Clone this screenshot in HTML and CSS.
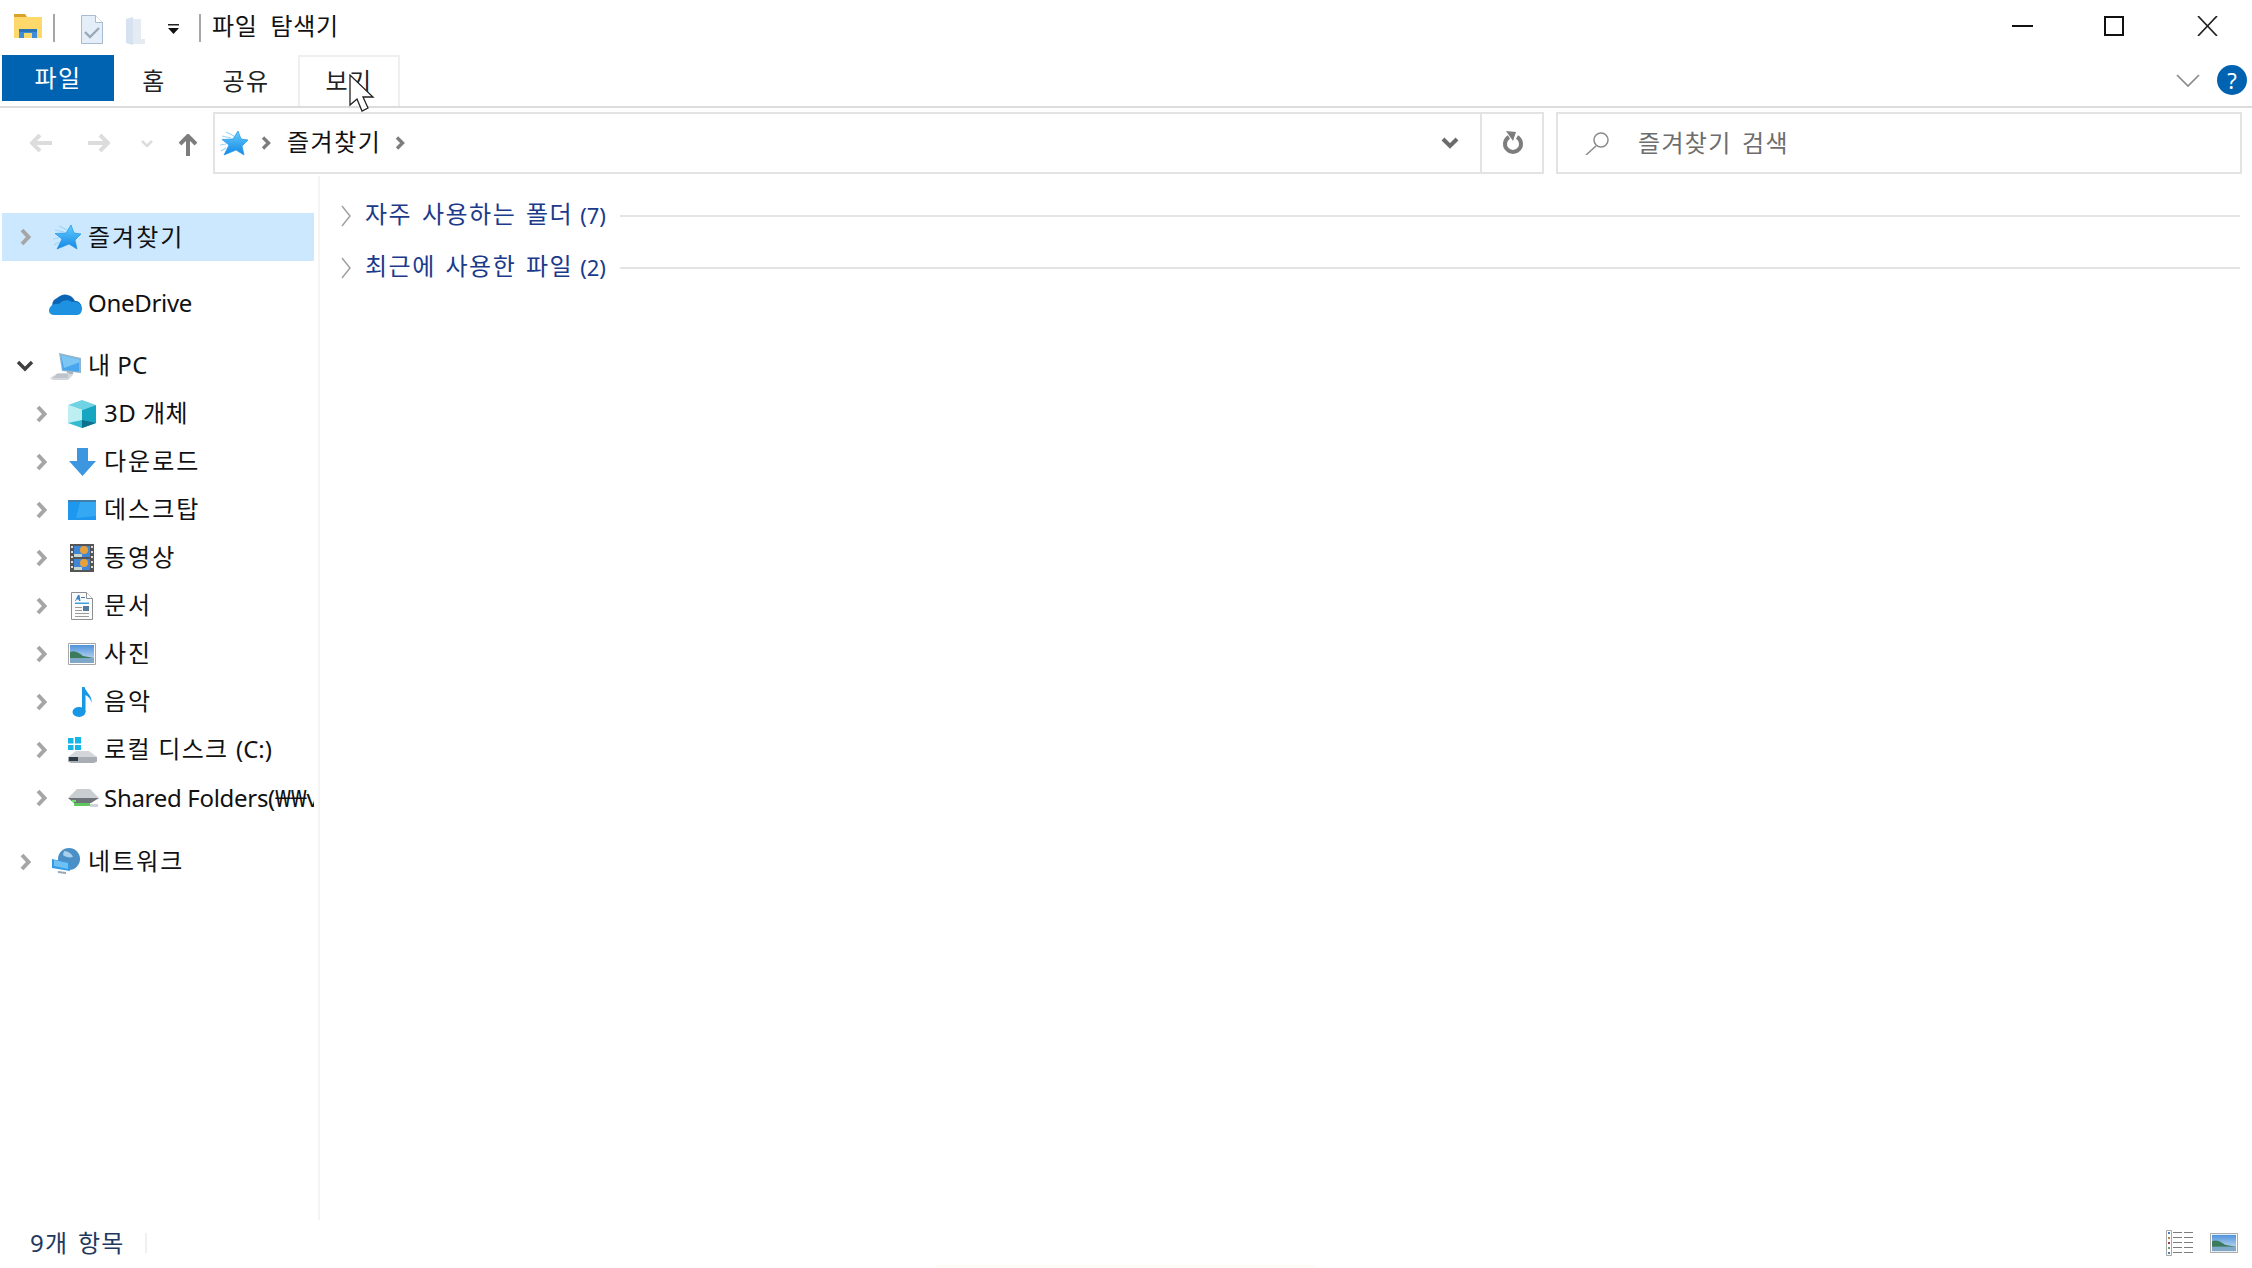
FILE: index.html
```html
<!DOCTYPE html>
<html lang="ko">
<head>
<meta charset="utf-8">
<title>파일 탐색기</title>
<link rel="stylesheet" href="styles.css">
</head>
<body>
<div class="window">
  <header class="titlebar">
    <div class="qat">
      <svg class="i-folder" width="28" height="24" viewBox="0 0 28 24"><path d="M0 0h11l2 3h15v21H0z" fill="#ffd86b"/><path d="M0 0h11l2 3H0z" fill="#d9a32a"/><path d="M5 24v-9h18v9h-5v-5h-8v5z" fill="#3f8fd6"/><path d="M5 15h18v3H5z" fill="#2a74b8"/></svg>
      <span class="qat-sep"></span>
      <svg class="i-check" width="22" height="29" viewBox="0 0 22 29"><path d="M.5.5h14l7 7v21H.5z" fill="#e4eef9" stroke="#aabbd0"/><path d="M14.5.5v7h7" fill="#fff" stroke="#aabbd0"/><path d="M4 17l5 5 9-9" fill="none" stroke="#9aa9b8" stroke-width="2.4"/></svg>
      <svg class="i-newfolder" width="19" height="28" viewBox="0 0 19 28"><path d="M0 2l7-2v28l-7-2z" fill="#d6e2ef"/><path d="M7 2h8v20h4v5H7z" fill="#e4ebf3"/></svg>
      <svg class="i-drop" width="11" height="10" viewBox="0 0 11 10"><path d="M0 0h11v1.500H0z" fill="#222"/><path d="M0 4h11l-5.500 6z" fill="#111"/></svg>
      <span class="qat-sep second"></span>
      <span class="title-text">파일 탐색기</span>
    </div>
    <div class="winctrls">
      <svg width="21" height="2" viewBox="0 0 21 2"><path d="M0 0h21v2H0z" fill="#111"/></svg>
      <svg class="maxbox" width="20" height="20" viewBox="0 0 20 20"><path d="M1 1h18v18H1z" fill="none" stroke="#111" stroke-width="2"/></svg>
      <svg width="21" height="20" viewBox="0 0 21 20"><path d="M1 0l19 20M20 0L1 20" stroke="#222" stroke-width="1.700" fill="none"/></svg>
    </div>
  </header>

  <nav class="ribbon">
    <span class="tab tab-file">파일</span>
    <span class="tab tab-home">홈</span>
    <span class="tab tab-share">공유</span>
    <span class="tab tab-view">보기</span>
    <div class="ribbon-right">
      <svg width="24" height="13" viewBox="0 0 24 13"><path d="M1 1l11 11L23 1" fill="none" stroke="#8a8a8a" stroke-width="1.700"/></svg>
      <span class="help">?</span>
    </div>
  </nav>

  <div class="addressrow">
    <div class="navbtns">
      <svg class="n-back" width="22" height="18" viewBox="0 0 22 18"><path d="M10 1L2 9l8 8M2 9h20" fill="none" stroke="#dcdcdc" stroke-width="4"/></svg>
      <svg class="n-fwd" width="22" height="18" viewBox="0 0 22 18"><path d="M12 1l8 8-8 8M20 9H0" fill="none" stroke="#dcdcdc" stroke-width="4"/></svg>
      <svg class="n-down" width="12" height="7" viewBox="0 0 12 7"><path d="M1 1l5 5 5-5" fill="none" stroke="#dcdcdc" stroke-width="2.500"/></svg>
      <svg class="n-up" width="18" height="22" viewBox="0 0 18 22"><path d="M1 10l8-8 8 8M9 2v20" fill="none" stroke="#7d7d7d" stroke-width="4"/></svg>
    </div>
    <div class="addrbox">
      <svg class="star-sm" width="28" height="26" viewBox="0 0 28 26"><use href="#star"/></svg>
      <svg class="crumb" width="10" height="14" viewBox="0 0 10 14"><path d="M2 1.500l5.500 5.500L2 12.500" fill="none" stroke="#7d7d7d" stroke-width="3.400"/></svg>
      <span class="crumb-text">즐겨찾기</span>
      <svg class="crumb" width="10" height="14" viewBox="0 0 10 14"><path d="M2 1.500l5.500 5.500L2 12.500" fill="none" stroke="#7d7d7d" stroke-width="3.400"/></svg>
      <svg class="addr-drop" width="18" height="12" viewBox="0 0 18 12"><path d="M2 2l7 7 7-7" fill="none" stroke="#6b6b6b" stroke-width="4"/></svg>
      <span class="addr-refresh">
        <svg width="22" height="24" viewBox="0 0 22 24"><path d="M7 6a8 8 0 1 0 8 0" fill="none" stroke="#7d7d7d" stroke-width="4"/><path d="M4 0l10 1-3 9z" fill="#7d7d7d"/></svg>
      </span>
    </div>
    <div class="searchbox">
      <svg width="26" height="24" viewBox="0 0 26 24"><circle cx="16" cy="9" r="7" fill="none" stroke="#8a8a8a" stroke-width="1.500"/><path d="M11 15L1 24" stroke="#8a8a8a" stroke-width="1.500"/></svg>
      <span class="search-text">즐겨찾기 검색</span>
    </div>
  </div>

  <div class="main">
    <aside class="sidebar">
      <ul class="tree">
        <li class="node top selected">
          <svg class="chev" width="12" height="20" viewBox="0 0 12 20"><use href="#chev"/></svg>
          <svg class="ico ico-star" width="28" height="26" viewBox="0 0 28 26"><use href="#star"/></svg>
          <span class="lbl kr">즐겨찾기</span>
        </li>
        <li class="node top gap-onedrive">
          <span class="chev-space"></span>
          <svg class="ico" width="33" height="24" viewBox="0 0 33 24"><path d="M9 21a8 8 0 0 1-1-15 11 11 0 0 1 18 3 6 6 0 0 1 1 12z" fill="#0a66b5"/><path d="M0 19c0-5 5-8 10-7 3-4 9-5 13-2 4-1 10 1 10 7 0 3-2 6-5 6H5c-3 0-5-2-5-4z" fill="#1e92e0"/></svg>
          <span class="lbl lat">OneDrive</span>
        </li>
        <li class="node top gap-pc">
          <svg class="chev-open" width="18" height="12" viewBox="0 0 18 12"><path d="M2 2l7 7 7-7" fill="none" stroke="#404040" stroke-width="3.400"/></svg>
          <svg class="ico ico-pc" width="32" height="30" viewBox="0 0 32 30"><path d="M9 2l22 5v15l-19-2z" fill="#8fb4cc"/><path d="M11 4l18 4.500v12l-16.500-1.500z" fill="#47a6ee"/><path d="M11 4l18 4.500v3L14 17z" fill="#7cc6f4"/><path d="M17 20l6 .5v3l-6-.5z" fill="#a9b4bf"/><path d="M0 27l8-5h10l5 2-5 5H3z" fill="#d3d7db"/><path d="M4 26h14M6 24h12" stroke="#aab1b8"/></svg>
          <span class="lbl mix">내 PC</span>
        </li>
        <li class="node sub">
          <svg class="chev" width="12" height="20" viewBox="0 0 12 20"><use href="#chev"/></svg>
          <svg class="ico" width="28" height="28" viewBox="0 0 28 28"><path d="M14 0l14 5-14 5L0 5z" fill="#6fd3e3"/><path d="M0 5l14 5v18L0 23z" fill="#bdeef2"/><path d="M14 10l14-5v18l-14 5z" fill="#17a6c2"/><path d="M14 20l14 3-14 5z" fill="#0f6f8c"/><path d="M0 23l14-3v8z" fill="#33bcd0"/></svg>
          <span class="lbl mix">3D 개체</span>
        </li>
        <li class="node sub">
          <svg class="chev" width="12" height="20" viewBox="0 0 12 20"><use href="#chev"/></svg>
          <svg class="ico ico-down" width="27" height="28" viewBox="0 0 27 28"><path d="M8 0h11v13h8L13.500 28 0 13h8z" fill="#3c97e0"/></svg>
          <span class="lbl kr">다운로드</span>
        </li>
        <li class="node sub">
          <svg class="chev" width="12" height="20" viewBox="0 0 12 20"><use href="#chev"/></svg>
          <svg class="ico" width="28" height="20" viewBox="0 0 28 20"><path d="M0 0h28v20H0z" fill="#1e98ee"/><path d="M0 0h28v2H0z" fill="#3e7fae"/><path d="M12 2h16v14L8 18z" fill="#35a8f4"/></svg>
          <span class="lbl kr">데스크탑</span>
        </li>
        <li class="node sub">
          <svg class="chev" width="12" height="20" viewBox="0 0 12 20"><use href="#chev"/></svg>
          <svg class="ico" width="28" height="28" viewBox="0 0 28 28"><path d="M2 0h24v28H2z" fill="#555"/><path d="M6 2h16v11H6z" fill="#3e86d8"/><path d="M6 15h16v11H6z" fill="#3e86d8"/><circle cx="16" cy="6" r="4" fill="#e8a13a"/><circle cx="16" cy="19" r="4" fill="#e8a13a"/><path d="M6 10h8v3H6zM6 23h8v3H6z" fill="#c9d6c9"/><path d="M3 2h2v2H3zM3 7h2v2H3zM3 12h2v2H3zM3 17h2v2H3zM3 22h2v2H3zM23 2h2v2h-2zM23 7h2v2h-2zM23 12h2v2h-2zM23 17h2v2h-2zM23 22h2v2h-2z" fill="#ddd"/></svg>
          <span class="lbl kr">동영상</span>
        </li>
        <li class="node sub">
          <svg class="chev" width="12" height="20" viewBox="0 0 12 20"><use href="#chev"/></svg>
          <svg class="ico ico-doc" width="22" height="28" viewBox="0 0 22 28"><path d="M.5.5h15l6 6v21H.5z" fill="#fbfbfb" stroke="#8f8f8f"/><path d="M15.500.5v6h6" fill="#fff" stroke="#8f8f8f"/><path d="M4 9l3-6h1.500l1 6H8l-.2-1.500H5.500L5 9z" fill="#3f82c4"/><path d="M10 5h4v1h-4z" fill="#3f82c4"/><path d="M4 10.500h14V12H4z" fill="#3aa0dc"/><path d="M4 15h7v1H4zM4 18h7v1H4zM4 21h14v1H4zM4 24h14v1H4z" fill="#9a9a9a"/><path d="M12 14h6v5h-6z" fill="#55799a"/></svg>
          <span class="lbl kr">문서</span>
        </li>
        <li class="node sub">
          <svg class="chev" width="12" height="20" viewBox="0 0 12 20"><use href="#chev"/></svg>
          <svg class="ico" width="28" height="22" viewBox="0 0 28 22"><use href="#photo"/></svg>
          <span class="lbl kr">사진</span>
        </li>
        <li class="node sub">
          <svg class="chev" width="12" height="20" viewBox="0 0 12 20"><use href="#chev"/></svg>
          <svg class="ico ico-music" width="22" height="30" viewBox="0 0 22 30"><ellipse cx="7" cy="25" rx="6.500" ry="5" fill="#1797e4"/><path d="M10 25V0h2.500c1 5 8 8 7 16-1-5-4-7-6-8v17z" fill="#1797e4"/></svg>
          <span class="lbl kr">음악</span>
        </li>
        <li class="node sub">
          <svg class="chev" width="12" height="20" viewBox="0 0 12 20"><use href="#chev"/></svg>
          <svg class="ico" width="29" height="26" viewBox="0 0 29 26"><path d="M0 1h5.500v5.500H0zM7 0h6v6.500H7zM0 8h5.500v5H0zM7 8h6v5H7z" fill="#16b6e8"/><path d="M0 20l8-6h13l8 6v5H0z" fill="#d3d7db"/><path d="M0 20h29v4.500L26 26H3L0 24.500z" fill="#a8aeb4"/><path d="M1 20h9v4H1z" fill="#2f3a42"/></svg>
          <span class="lbl disk">로컬 디스크 <span class="latin">(C:)</span></span>
        </li>
        <li class="node sub row-shared">
          <svg class="chev" width="12" height="20" viewBox="0 0 12 20"><use href="#chev"/></svg>
          <svg class="ico" width="31" height="20" viewBox="0 0 31 20"><path d="M0 10L9 1h13l9 9-8 3H8z" fill="#c9ced3"/><path d="M0 10h31l-8 5H6z" fill="#6d7378"/><path d="M4 12h4v2H4z" fill="#6fe06a"/><path d="M6 15h16v3H6z" fill="#5ec85c"/><path d="M22 16h8v3h-8z" fill="#cfd4d8"/></svg>
          <span class="lbl lat">Shared Folders(₩₩vmware-host)</span>
        </li>
        <li class="node top gap-net">
          <svg class="chev" width="12" height="20" viewBox="0 0 12 20"><use href="#chev"/></svg>
          <svg class="ico" width="28" height="28" viewBox="0 0 28 28"><circle cx="17" cy="11" r="11" fill="#4a8fc6"/><path d="M12 3c4 0 8 3 9 6-3 1-8 0-10-2z" fill="#a8d0ea"/><path d="M0 11l18 4v8L0 20z" fill="#2f9be8"/><path d="M2 12l14 3v6L2 18z" fill="#6fc1f4"/><path d="M6 23l8 1v2l-8-1z" fill="#9aa6b0"/></svg>
          <span class="lbl kr">네트워크</span>
        </li>
      </ul>
    </aside>
    <section class="content">
      <div class="group">
        <svg width="10" height="22" viewBox="0 0 10 22"><path d="M1 1l8 10-8 10" fill="none" stroke="#a0a0a0" stroke-width="1.500"/></svg>
        <span class="group-name">자주 사용하는 폴더</span><span class="group-count">(7)</span>
        <span class="group-line"></span>
      </div>
      <div class="group">
        <svg width="10" height="22" viewBox="0 0 10 22"><path d="M1 1l8 10-8 10" fill="none" stroke="#a0a0a0" stroke-width="1.500"/></svg>
        <span class="group-name">최근에 사용한 파일</span><span class="group-count">(2)</span>
        <span class="group-line"></span>
      </div>
    </section>
  </div>

  <footer class="statusbar">
    <span class="status-text">9개 항목</span>
    <span class="status-sep"></span>
    <div class="viewbtns">
      <svg width="27" height="26" viewBox="0 0 27 26"><path d="M.5.500h5v25h-5z" fill="#fff" stroke="#a8a8a8"/><path d="M2 2h2v2H2z" fill="#4a80b8"/><path d="M2 7h2v2H2z" fill="#b8863a"/><path d="M2 12h2v2H2z" fill="#a83a3a"/><path d="M2 17h2v2H2z" fill="#6a9a6a"/><path d="M2 22h2v2H2z" fill="#4a80b8"/><path d="M7 2h9v1H7zM18 2h9v1h-9zM7 7h9v1H7zM18 7h9v1h-9zM7 12h9v1H7zM18 12h9v1h-9zM7 17h9v1H7zM18 17h9v1h-9zM7 22h9v1H7zM18 22h9v1h-9z" fill="#7d7d7d"/></svg>
      <svg width="28" height="20" viewBox="0 0 28 22" preserveAspectRatio="none"><use href="#photo"/></svg>
    </div>
  </footer>

  <span class="taskbar-hint"></span>
  <svg class="cursor" width="26" height="38" viewBox="0 0 26 38"><path d="M1 1v30l7-6 5 12 6-3-5-11h10z" fill="#fff" stroke="#222" stroke-width="1.300"/></svg>

  <svg class="defs" width="0" height="0">
    <defs>
      <linearGradient id="stargrad" x1="0" y1="0" x2="0" y2="1"><stop offset="0" stop-color="#63cdfc"/><stop offset="1" stop-color="#1488e6"/></linearGradient>
      <linearGradient id="sky" x1="0" y1="0" x2="0" y2="1"><stop offset="0" stop-color="#4f93dc"/><stop offset="1" stop-color="#d7e7f2"/></linearGradient>
      <path id="chev" d="M2 3l6.500 7L2 17" fill="none" stroke="#a6a6a6" stroke-width="4"/>
      <g id="star">
        <path d="M18 1l3 8 7 1-6 6 2 9-8-5-12 5 5-10-7-5.500 11-.5z" fill="url(#stargrad)" stroke="#1f94e8" stroke-width=".7"/>
        <path d="M6 2l8 4M2 6l9 2M0 15l6-1M1 21l5-3" stroke="#9fd6f6" stroke-width="1.200"/>
      </g>
      <g id="photo">
        <path d="M.5.500h27v21H.5z" fill="#fff" stroke="#a6a6a6"/>
        <path d="M2 2h24v18H2z" fill="url(#sky)"/>
        <path d="M2 9c5-2 9 1 13 4l11 2v1H2z" fill="#3c7a5c"/>
        <path d="M2 15h24v5H2z" fill="#7fa8c8"/>
      </g>
    </defs>
  </svg>
</div>
</body>
</html>
```
FILE: styles.css
```css
* { box-sizing: border-box; }
html, body { margin: 0; padding: 0; background: #fff; }
body { font-family: "Noto Sans", "Noto Sans CJK KR", sans-serif; color: #111; }
.window { position: relative; width: 2252px; height: 1268px; display: flex; flex-direction: column; overflow: hidden; background: #fff; }

.titlebar { height: 55px; flex: none; display: flex; align-items: flex-start; justify-content: space-between; }
.qat { display: flex; align-items: flex-start; padding: 14px 0 0 14px; }
.qat-sep { width: 2px; height: 28px; background: #a6a6a6; margin-left: 11px; }
.qat-sep.second { margin-left: 20px; }
.i-check { margin: 1px 0 0 26px; }
.i-newfolder { margin: 3px 0 0 23px; }
.i-drop { margin: 10px 0 0 23px; }
.title-text { font-size: 24px; line-height: 28px; margin: -2px 0 0 11px; letter-spacing: .7px; word-spacing: 6px; color: #111; }
.winctrls { display: flex; align-items: center; padding: 16px 34px 0 0; height: 36px; }
.winctrls .maxbox { margin: 0 73px 0 71px; }

.ribbon { height: 53px; flex: none; display: flex; align-items: flex-start; padding-left: 2px; border-bottom: 2px solid #dcdcdc; position: relative; }
.tab { display: flex; align-items: center; justify-content: center; font-size: 24px; line-height: 28px; height: 46px; letter-spacing: 1.500px; color: #222; }
.tab-file { width: 112px; background: #0063b1; color: #fff; }
.tab-home { width: 78px; padding: 3px 0 0 2px; height: 49px; }
.tab-share { width: 106px; padding: 3px 0 0 2px; height: 49px; }
.tab-view { width: 102px; height: 51px; border: 2px solid #efefef; border-bottom: 0; padding-bottom: 2px; }
.ribbon-right { margin-left: auto; display: flex; align-items: flex-start; padding: 10px 5px 0 0; }
.ribbon-right svg { margin: 9px 17px 0 0; }
.help { width: 30px; height: 30px; border-radius: 50%; background: #0063b1; color: #fff; font-size: 22px; line-height: 30px; text-align: center; }

.addressrow { height: 68px; flex: none; display: flex; align-items: flex-start; padding-top: 4px; }
.navbtns { width: 213px; flex: none; position: relative; display: flex; align-items: center; height: 62px; }
.n-back { margin: 0 0 0 30px; }
.n-fwd { margin: 0 0 0 36px; }
.n-down { margin: 0 0 0 31px; }
.n-up { margin: 4px 0 0 26px; }
.addrbox { width: 1331px; height: 62px; border: 2px solid #e3e3e3; display: flex; align-items: center; padding-left: 5px; }
.crumb { margin-left: 13px; }
.crumb-text { font-size: 24px; line-height: 28px; letter-spacing: 1.500px; margin-left: 16px; margin-top: -2px; }
.crumb-text + .crumb { margin-left: 14px; }
.addr-drop { margin-left: auto; }
.addr-refresh { width: 62px; height: 58px; margin-left: 21px; padding-left: 2px; border-left: 2px solid #e3e3e3; display: flex; align-items: center; justify-content: center; }
.searchbox { width: 686px; height: 62px; margin-left: 12px; border: 2px solid #e3e3e3; display: flex; align-items: center; padding-left: 27px; }
.search-text { font-size: 24px; line-height: 28px; color: #6d6d6d; margin-left: 27px; margin-top: -1px; letter-spacing: 1.300px; word-spacing: 3px; }

.main { flex: 1; display: flex; min-height: 0; }
.sidebar { width: 320px; flex: none; padding: 37px 6px 0 2px; border-right: 2px solid #f4f4f4; overflow: hidden; }
.tree { list-style: none; margin: 0; padding: 0; width: 312px; }
.node { position: relative; height: 48px; display: flex; align-items: center; overflow: hidden; white-space: nowrap; }
.node.selected { background: #cce8ff; }
.node.selected .lbl { margin-top: 0; }
.row-shared .lbl { margin-top: 0; }
.gap-onedrive { margin-top: 19px; }
.gap-pc { margin-top: 14px; }
.gap-net { margin-top: 16px; }
.top .chev { flex: none; margin-left: 18px; }
.top .chev-open { flex: none; margin-left: 14px; }
.sub .chev { flex: none; margin-left: 34px; }
.chev-space { width: 30px; flex: none; }
.ico { flex: none; }
.lbl { font-size: 24px; line-height: 28px; color: #111; position: absolute; margin-top: -2px; }
.top .lbl { left: 86px; }
.sub .lbl { left: 102px; }
.top .ico { position: absolute; left: 50px; }
.top .ico-star { left: 51px; }
.top .ico-pc { left: 48px; }
.gap-onedrive .ico { left: 47px; }
.sub .ico { position: absolute; left: 66px; }
.sub .ico-down { left: 67px; }
.sub .ico-doc { left: 69px; }
.sub .ico-music { left: 70px; }
.kr { letter-spacing: 2px; }
.disk { letter-spacing: 1.300px; }
.mix { letter-spacing: .5px; }
.lat { letter-spacing: -.3px; }
.latin { letter-spacing: 0; }

.content { flex: 1; padding: 14px 12px 0 21px; }
.group { height: 52px; display: flex; align-items: center; }
.group-name { font-size: 24px; line-height: 28px; color: #1c3a8a; margin-left: 14px; margin-top: -4px; letter-spacing: 1.500px; word-spacing: 2px; }
.group-count { font-size: 22px; line-height: 28px; color: #1c3a8a; margin-left: 7px; margin-top: -2px; }
.group-line { flex: 1; height: 2px; background: #e4e4e4; margin-left: 14px; }

.statusbar { height: 48px; flex: none; display: flex; align-items: center; padding: 0 14px 2px 30px; }
.status-text { font-size: 24px; line-height: 28px; color: #22385f; letter-spacing: 1.300px; word-spacing: 2px; }
.status-sep { width: 2px; height: 20px; background: #f0f0f0; margin-left: 20px; }
.viewbtns { margin-left: auto; display: flex; align-items: center; gap: 17px; }

.taskbar-hint { position: absolute; left: 935px; top: 1265px; width: 380px; height: 3px; background: #fdfdf7; }
.cursor { position: absolute; left: 349px; top: 74px; }
.defs { position: absolute; }
```
